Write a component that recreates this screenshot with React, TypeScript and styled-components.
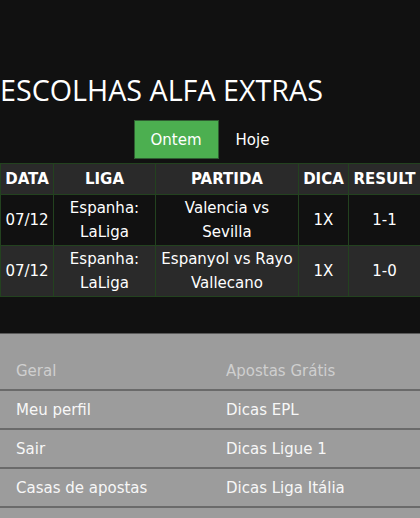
import { Fragment } from "react";
import styled, { createGlobalStyle } from "styled-components";

const GlobalStyle = createGlobalStyle`
  html, body {
    margin: 0;
    padding: 0;
    background: #111111;
    font-family: "DejaVu Sans", Verdana, sans-serif;
  }
`;

const Page = styled.div`
  width: 420px;
  min-height: 518px;
  background: #111111;
  display: flex;
  flex-direction: column;
`;

const Picks = styled.section`
  padding-top: 72px;
  padding-bottom: 36px;
`;

const Title = styled.h1`
  margin: 0;
  font-family: "Open Sans", "Noto Sans", sans-serif;
  font-weight: 400;
  font-size: 28.7px;
  line-height: 36px;
  color: #ffffff;
  white-space: nowrap;
`;

const Tabs = styled.div`
  display: flex;
  justify-content: center;
  margin-top: 12px;
  margin-bottom: 4px;
`;

const Tab = styled.button<{ $active?: boolean }>`
  font-family: "DejaVu Sans", Verdana, sans-serif;
  font-size: 15px;
  height: 39px;
  padding: 0 16px;
  border: 1px solid ${(p) => (p.$active ? "#2f5d31" : "transparent")};
  background: ${(p) => (p.$active ? "#4caf50" : "transparent")};
  color: #ffffff;
  cursor: pointer;
`;

const Table = styled.table`
  width: 420px;
  table-layout: fixed;
  border-collapse: collapse;
  color: #ffffff;
`;

const Th = styled.th<{ $w: number }>`
  box-sizing: border-box;
  width: ${(p) => p.$w}px;
  height: 31px;
  padding: 0;
  background: #2a2a2a;
  border: 1px solid #23421f;
  font-weight: bold;
  font-size: 15px;
  text-align: center;
  white-space: nowrap;
`;

const Row = styled.tr<{ $alt?: boolean }>`
  background: ${(p) => (p.$alt ? "#2a2a2a" : "#111111")};
`;

const Td = styled.td`
  height: 50px;
  padding: 0 4px;
  border: 1px solid #23421f;
  text-align: center;
  line-height: 24px;
  font-size: 15px;
`;

const Footer = styled.footer`
  flex: 1;
  background: #9c9c9c;
  border-top: 1px solid #5a5a5a;
  padding-top: 18px;
  display: grid;
  grid-template-columns: 210px 210px;
  align-content: start;
`;

const Cell = styled.div<{ $head?: boolean }>`
  height: 37px;
  display: flex;
  align-items: center;
  padding-left: 16px;
  border-bottom: 2px solid #6a6a6a;
  font-size: 15px;
  color: ${(p) => (p.$head ? "#cfcfcf" : "#f7f7f7")};
`;

const rows = [
  { date: "07/12", league: "Espanha: LaLiga", match: "Valencia vs Sevilla", tip: "1X", result: "1-1" },
  { date: "07/12", league: "Espanha: LaLiga", match: "Espanyol vs Rayo Vallecano", tip: "1X", result: "1-0" },
];

const links = [
  ["Geral", "Apostas Grátis"],
  ["Meu perfil", "Dicas EPL"],
  ["Sair", "Dicas Ligue 1"],
  ["Casas de apostas", "Dicas Liga Itália"],
];

export default function App() {
  return (
    <Page>
      <GlobalStyle />
      <Picks>
        <Title>ESCOLHAS ALFA EXTRAS</Title>
        <Tabs>
          <Tab $active>Ontem</Tab>
          <Tab>Hoje</Tab>
        </Tabs>
        <Table>
          <thead>
            <tr>
              <Th $w={53}>DATA</Th>
              <Th $w={102}>LIGA</Th>
              <Th $w={143}>PARTIDA</Th>
              <Th $w={50}>DICA</Th>
              <Th $w={72}>RESULT</Th>
            </tr>
          </thead>
          <tbody>
            {rows.map((r, i) => (
              <Row key={i} $alt={i % 2 === 1}>
                <Td>{r.date}</Td>
                <Td>{r.league}</Td>
                <Td>{r.match}</Td>
                <Td>{r.tip}</Td>
                <Td>{r.result}</Td>
              </Row>
            ))}
          </tbody>
        </Table>
      </Picks>
      <Footer>
        {links.map(([a, b], i) => (
          <Fragment key={i}>
            <Cell $head={i === 0}>{a}</Cell>
            <Cell $head={i === 0}>{b}</Cell>
          </Fragment>
        ))}
      </Footer>
    </Page>
  );
}
